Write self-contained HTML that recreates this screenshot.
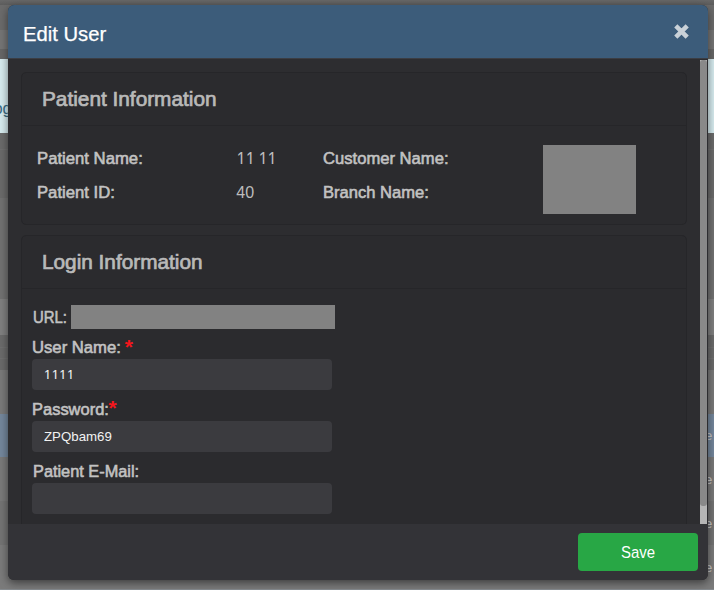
<!DOCTYPE html>
<html lang="en">
<head>
<meta charset="utf-8">
<title>Edit User</title>
<style>
  html, body { margin: 0; padding: 0; }
  body {
    width: 714px; height: 590px; overflow: hidden; position: relative;
    background: #6e6e6e;
    font-family: "Liberation Sans", "DejaVu Sans", sans-serif;
    color: #c8c8c8;
  }
  /* dimmed page behind the modal */
  .bg div { position: absolute; left: 0; width: 714px; }
  .bg span { position: absolute; left: 705px; font-size: 13px; line-height: 14px; color: #c9c9c9; }

  .modal {
    position: absolute; left: 8px; top: 5px; width: 700px; height: 575px;
    border-radius: 6px; background: #2d2d30;
    box-shadow: 0 3px 9px rgba(0,0,0,.5);
  }
  .clip { position: absolute; left: 0; top: 0; width: 700px; height: 575px; border-radius: 6px; overflow: hidden; }
  .mhead { position: absolute; left: 0; top: 0; width: 700px; height: 53px; background: #3c5c7a; }
  .mhead-b { position: absolute; left: 0; top: 53px; width: 700px; height: 1px; background: #3b3d43; }
  .close { position: absolute; left: 666px; top: 19px; width: 15px; height: 15px; }
  .mfoot { position: absolute; left: 0; top: 519px; width: 700px; height: 56px; background: #333337; }
  .btn { position: absolute; left: 570px; top: 9px; width: 120px; height: 38px; background: #28a745; border-radius: 4px; }

  .card { position: absolute; left: 13px; width: 666px; border: 1px solid #262629; border-radius: 5px; box-sizing: border-box; background: #2b2b2e; }
  .card .ch { position: absolute; left: 0; top: 0; right: 0; height: 52px; border-bottom: 1px solid #262629; }

  .t { position: absolute; margin: 0; padding: 0; white-space: nowrap; transform-origin: 0 50%; line-height: 20px; font-weight: 400; }
  .h4 { font-size: 19.9px; line-height: 24px; color: #fff; -webkit-text-stroke: .25px #fff; }
  .h5 { font-size: 20.2px; line-height: 24px; font-weight: 400; -webkit-text-stroke: .7px #b9b9b9; color: #b9b9b9; }
  .lbl { font-size: 17px; font-weight: 400; -webkit-text-stroke: .6px #c2c2c2; color: #c2c2c2; }
  .val { font-size: 16px; color: #bcbcbc; }
  .star { font-size: 21px; font-weight: 700 !important; color: #f4161c; line-height: 24px; }
  .itx { font-size: 13px; color: #f2f2f2; }
  .save { font-size: 17.2px; color: #fff; }

  .inp { position: absolute; left: 24px; width: 300px; height: 31px; background: #3b3b3f; border-radius: 4px; }
  .mask { position: absolute; background: #828282; }
  .sb { position: absolute; left: 692px; top: 55px; width: 7px; height: 464px; background: #b5b5b5; }
  .sb i { position: absolute; left: 0; top: 0; width: 7px; height: 446px; background: #898989; display: block; border-radius: 3px; }
</style>
</head>
<body>
  <div class="bg">
    <div style="top:0;height:30px;background:#6b6b6b"></div>
    <div style="top:30px;height:19px;background:#757575"></div>
    <div style="top:49px;height:10px;background:#676767"></div>
    <div style="top:59px;height:74px;background:#d7ecf0"></div>
    <div style="top:133px;height:65px;background:#6b6b6b"></div>
    <div style="top:149px;height:1px;background:#707070"></div>
    <div style="top:198px;height:101px;background:#727272"></div>
    <div style="top:299px;height:36px;background:#808080"></div>
    <div style="top:335px;height:35px;background:#6b6b6b"></div>
    <div style="top:347px;height:1px;background:#707070"></div>
    <div style="top:358px;height:1px;background:#707070"></div>
    <div style="top:370px;height:44px;background:#7a7a7a"></div>
    <div style="top:414px;height:43px;background:#74879c"></div>
    <div style="top:457px;height:44px;background:#7a7a7a"></div>
    <div style="top:501px;height:44px;background:#747474"></div>
    <div style="top:545px;height:44px;background:#7b7b7b"></div>
    <div style="top:589px;height:1px;background:#858a8e"></div>
    <div style="top:0;height:5px;background:linear-gradient(rgba(0,0,0,.03),rgba(0,0,0,.13))"></div>
    <span style="top:429px">e</span>
    <span style="top:473px">e</span>
    <span style="top:517px">e</span>
    <span style="top:561px">e</span>
    <span style="left:-6.6px;top:100.8px;font-size:16.5px;color:#3b6c84">og</span>
  </div>

  <div class="modal">
   <div class="clip">
    <div class="mhead"></div>
    <div class="mhead-b"></div>
    <h4 class="t h4" id="t1" style="transform:scaleX(1.017);left:15.1px;top:16.8px;">Edit User</h4>
    <svg class="close" viewBox="0 0 15 15"><path d="M1.8 1.8 L13.2 13.2 M13.2 1.8 L1.8 13.2" stroke="#c9d1d8" stroke-width="4.5" stroke-linecap="butt" fill="none"/></svg>

    <div class="card" style="top:67px;height:153px;">
      <div class="ch"></div>
      <div class="mask" style="left:521px;top:72px;width:93px;height:69px;"></div>
    </div>
    <h5 class="t h5" id="t2" style="transform:scaleX(1.03);left:33.7px;top:81.7px;">Patient Information</h5>
    <label class="t lbl" id="t4" style="transform:scaleX(0.982);left:29px;top:144.4px;">Patient Name:</label>
    <span class="t val" id="t6" style="left:228.8px;top:146px;word-spacing:-3.4px;letter-spacing:1.4px;clip-path:inset(0 0 6.9px 0);transform:scaleY(1.26);transform-origin:0 13.1px;">11 11</span>
    <label class="t lbl" id="t8" style="transform:scaleX(0.977);left:315.3px;top:144.4px;">Customer Name:</label>
    <label class="t lbl" id="t5" style="transform:scaleX(0.981);left:29px;top:178.4px;">Patient ID:</label>
    <span class="t val" id="t7" style="left:228.3px;top:178.3px;">40</span>
    <label class="t lbl" id="t9" style="transform:scaleX(0.974);left:315.3px;top:178.4px;">Branch Name:</label>

    <div class="card" style="top:230px;height:330px;border-bottom-left-radius:0;border-bottom-right-radius:0;">
      <div class="ch"></div>
    </div>
    <h5 class="t h5" id="t3" style="transform:scaleX(1.029);left:33.6px;top:244.8px;">Login Information</h5>

    <label class="t lbl" id="t10" style="transform:scaleX(0.876);left:24.8px;top:302.7px;">URL:</label>
    <div class="mask" style="left:63px;top:300px;width:264px;height:24px;"></div>
    <label class="t lbl" id="t11" style="transform:scaleX(0.98);left:24.4px;top:333.2px;">User Name:</label>
    <span class="t star" id="s1" style="left:116.8px;top:329.8px;">*</span>
    <div class="inp" style="top:354px;"></div>
    <span class="t itx" id="t15" style="letter-spacing:1.4px;left:36px;top:361px;clip-path:inset(0 0 7px 0);transform:scaleY(1.12);transform-origin:0 13px;">1111</span>
    <label class="t lbl" id="t12" style="transform:scaleX(0.969);left:24.4px;top:394.8px;">Password:</label>
    <span class="t star" id="s2" style="left:100.6px;top:391.4px;">*</span>
    <div class="inp" style="top:416px;"></div>
    <span class="t itx" id="t16" style="transform:scaleX(1.02);left:36px;top:422px;">ZPQbam69</span>
    <label class="t lbl" id="t13" style="transform:scaleX(0.96);left:24.8px;top:457px;">Patient E-Mail:</label>
    <div class="inp" style="top:478px;"></div>

    <div class="sb"><i></i></div>
    <div class="mfoot"><div class="btn"></div></div>
    <span class="t save" id="t14" style="transform:scaleX(0.87);left:613px;top:537px;">Save</span>
   </div>
  </div>
</body>
</html>
